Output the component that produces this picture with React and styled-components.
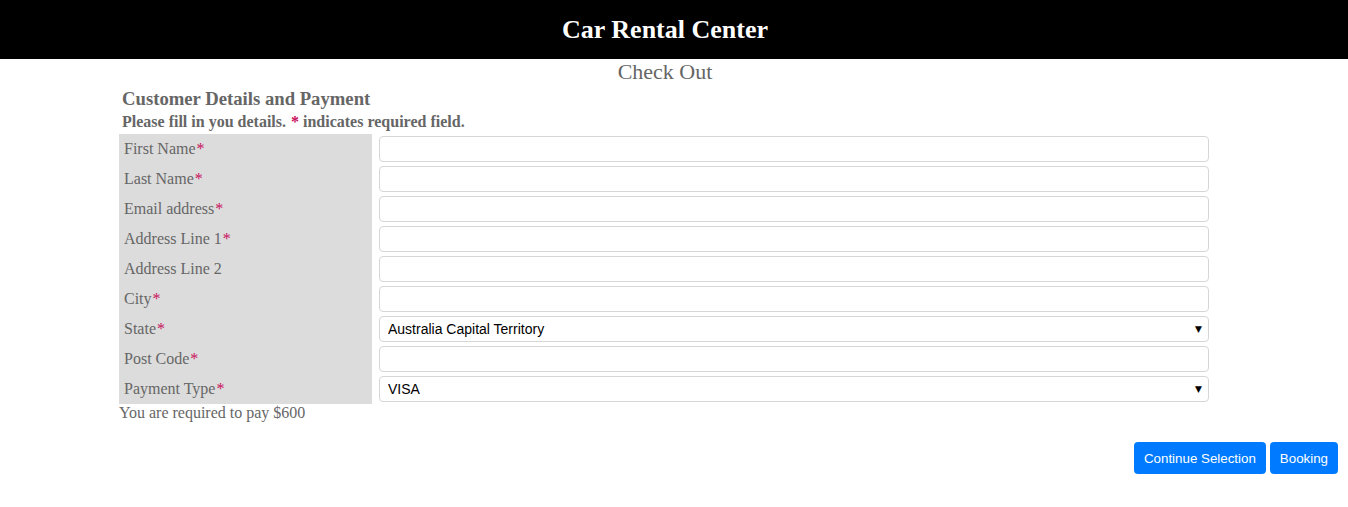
import React from "react";
import styled, { createGlobalStyle } from "styled-components";

const Global = createGlobalStyle`
  html, body { margin: 0; padding: 0; background: #fff; }
  body { font-family: "Liberation Serif", "Times New Roman", serif; color: #666; }
`;

const Header = styled.header`
  background: #000;
  height: 59px;
  display: flex;
  align-items: center;
  justify-content: center;
  padding-right: 18px;
`;

const Title = styled.h1`
  margin: 0;
  color: #fff;
  font-size: 26px;
  font-weight: bold;
  font-family: "Liberation Serif", "Times New Roman", serif;
`;

const PageTitle = styled.h2`
  margin: 1px 0 0;
  padding-right: 18px;
  text-align: center;
  font-size: 22px;
  line-height: 24px;
  font-weight: normal;
  color: #666;
`;

const Main = styled.main`
  padding-left: 119px;
  width: 1090px;
`;

const SectionTitle = styled.h3`
  margin: 4px 0 0 3px;
  font-size: 18.7px;
  line-height: 22px;
  font-weight: bold;
  color: #666;
`;

const Note = styled.p`
  margin: 1px 0 0 3px;
  font-size: 16px;
  line-height: 22px;
  font-weight: bold;
  color: #666;
`;

const FormGrid = styled.div`
  margin-top: 1px;
  display: grid;
  grid-template-columns: 253px 1fr;
  column-gap: 7px;
`;

const Label = styled.label`
  background: #dcdcdc;
  height: 30px;
  display: flex;
  align-items: center;
  padding-left: 5px;
  font-size: 16px;
  color: #666;
`;

const Star = styled.span`
  color: #c8105c;
  margin-left: 1px;
`;

const Cell = styled.div`
  height: 30px;
  display: flex;
  align-items: center;
  position: relative;
`;

const Input = styled.input`
  box-sizing: border-box;
  width: 100%;
  height: 26px;
  border: 1px solid #d6d6d6;
  border-radius: 4px;
  padding: 0 8px;
  font-family: "Liberation Sans", Arial, sans-serif;
  font-size: 14px;
  background: #fff;
  outline: none;
`;

const Select = styled.select`
  box-sizing: border-box;
  width: 100%;
  height: 26px;
  border: 1px solid #d6d6d6;
  border-radius: 4px;
  padding: 0 8px;
  font-family: "Liberation Sans", Arial, sans-serif;
  font-size: 14px;
  color: #000;
  background: #fff;
  appearance: none;
  -webkit-appearance: none;
  outline: none;
`;

const Arrow = styled.span`
  position: absolute;
  right: 7px;
  top: 50%;
  transform: translateY(-50%);
  font-size: 9px;
  color: #000;
  pointer-events: none;
  font-family: "DejaVu Sans", sans-serif;
`;

const Total = styled.p`
  margin: 0;
  font-size: 16px;
  line-height: 18px;
  color: #666;
`;

const Actions = styled.div`
  display: flex;
  justify-content: flex-end;
  gap: 4px;
  padding-right: 10px;
  margin-top: 20px;
`;

const Button = styled.button`
  height: 32px;
  padding: 0 10px;
  border: none;
  border-radius: 4px;
  background: #007bff;
  color: #fff;
  font-family: "Liberation Sans", Arial, sans-serif;
  font-size: 13.33px;
  cursor: pointer;
`;

const fields = [
  { label: "First Name", req: true },
  { label: "Last Name", req: true },
  { label: "Email address", req: true },
  { label: "Address Line 1", req: true },
  { label: "Address Line 2", req: false },
  { label: "City", req: true },
  { label: "State", req: true, options: ["Australia Capital Territory"] },
  { label: "Post Code", req: true },
  { label: "Payment Type", req: true, options: ["VISA"] },
];

export default function App() {
  return (
    <>
      <Global />
      <Header>
        <Title>Car Rental Center</Title>
      </Header>
      <PageTitle>Check Out</PageTitle>
      <Main>
        <SectionTitle>Customer Details and Payment</SectionTitle>
        <Note>
          Please fill in you details. <Star>*</Star> indicates required field.
        </Note>
        <FormGrid>
          {fields.map((f) => (
            <React.Fragment key={f.label}>
              <Label>
                {f.label}
                {f.req && <Star>*</Star>}
              </Label>
              <Cell>
                {f.options ? (
                  <>
                    <Select defaultValue={f.options[0]}>
                      {f.options.map((o) => (
                        <option key={o}>{o}</option>
                      ))}
                    </Select>
                    <Arrow>▼</Arrow>
                  </>
                ) : (
                  <Input type="text" />
                )}
              </Cell>
            </React.Fragment>
          ))}
        </FormGrid>
        <Total>You are required to pay $600</Total>
      </Main>
      <Actions>
        <Button>Continue Selection</Button>
        <Button>Booking</Button>
      </Actions>
    </>
  );
}
